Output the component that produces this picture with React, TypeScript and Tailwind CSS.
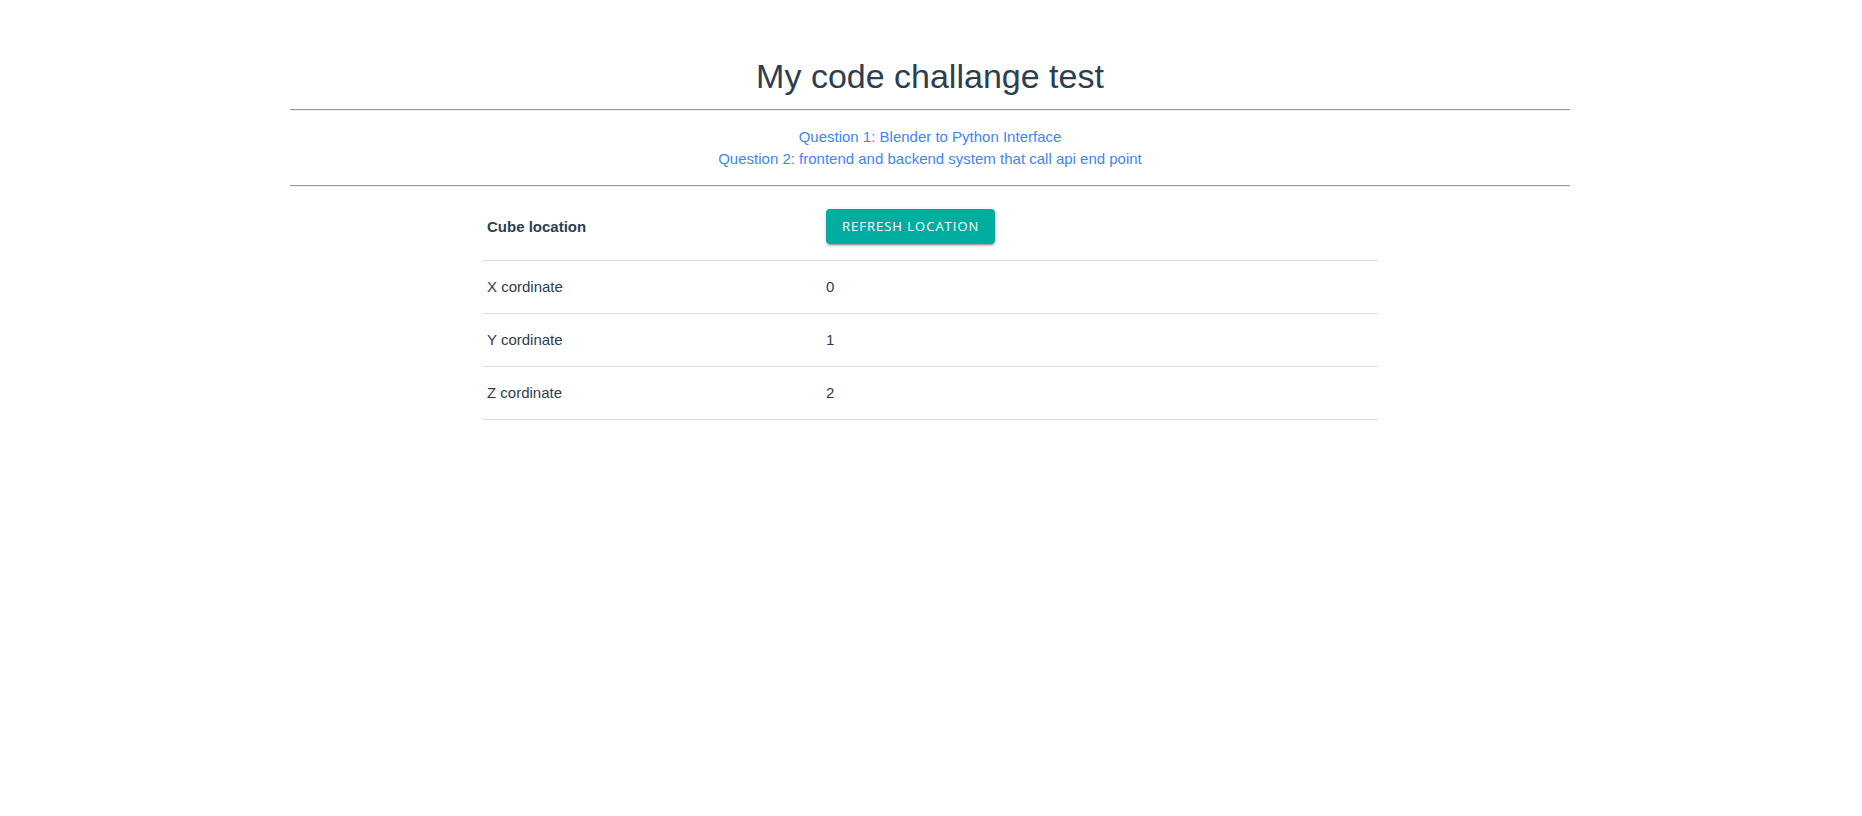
import React from "react";

const rows = [
  { label: "X cordinate", value: "0" },
  { label: "Y cordinate", value: "1" },
  { label: "Z cordinate", value: "2" },
];

export default function App() {
  return (
    <div className="min-h-[816px] w-full bg-white pr-[2px] text-[#2c3e50] font-['Liberation_Sans',Arial,sans-serif]">
      <div className="mx-auto w-[1280px] pt-[57px] text-center">
        <h1 className="text-[34px] leading-[39px] font-normal">My code challange test</h1>
        <div className="mt-[13px] h-[2px] border-t border-b border-t-[#9a9a9a] border-b-[#eeeeee]" />
        <nav className="mt-[15px] flex flex-col items-center text-[15px] leading-[22px]">
          <a href="#" className="text-[#4285f4]">Question 1: Blender to Python Interface</a>
          <a href="#" className="text-[#4285f4]">Question 2: frontend and backend system that call api end point</a>
        </nav>
        <div className="mt-[15px] h-[2px] border-t border-b border-t-[#9a9a9a] border-b-[#eeeeee]" />
        <div className="mx-auto mt-[6px] w-[896px] text-left text-[15px]">
          <div className="grid h-[68px] grid-cols-[344px_1fr] items-center border-b border-[#dedede]">
            <div className="pl-[5px] pt-[2px] font-bold">Cube location</div>
            <div>
              <button className="h-[35px] rounded-[4px] bg-[#00ad9f] px-[16px] font-['Open_Sans',sans-serif] text-[13px] font-medium uppercase tracking-[1px] text-white shadow-[0_3px_1px_-2px_rgba(0,0,0,0.2),0_2px_2px_0_rgba(0,0,0,0.14),0_1px_5px_0_rgba(0,0,0,0.12)]">
                Refresh location
              </button>
            </div>
          </div>
          {rows.map((r) => (
            <div key={r.label} className="grid h-[53px] grid-cols-[344px_1fr] items-center border-b border-[#dedede]">
              <div className="pl-[5px]">{r.label}</div>
              <div>{r.value}</div>
            </div>
          ))}
        </div>
      </div>
    </div>
  );
}
